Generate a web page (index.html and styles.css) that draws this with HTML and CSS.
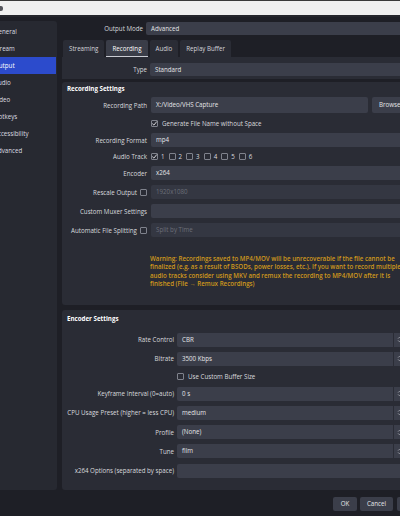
FILE: index.html
```html
<!DOCTYPE html>
<html>
<head>
  <title>Settings</title>
  <link rel="stylesheet" href="styles.css">
</head>
<body>
  <div class="titlebar"><span class="title-icon"></span></div>

  <div class="window">
    <ul class="sidebar">
      <li>General</li>
      <li>Stream</li>
      <li class="active">Output</li>
      <li>Audio</li>
      <li>Video</li>
      <li>Hotkeys</li>
      <li>Accessibility</li>
      <li>Advanced</li>
    </ul>

    <div class="content">
      <div class="mode-row">
        <span class="label">Output Mode</span>
        <div class="field">Advanced</div>
      </div>

      <div class="tabs">
        <span class="tab">Streaming</span>
        <span class="tab active">Recording</span>
        <span class="tab">Audio</span>
        <span class="tab">Replay Buffer</span>
      </div>

      <div class="type-pane">
        <span class="label">Type</span>
        <div class="field">Standard</div>
      </div>

      <section class="group rec-group">
        <div class="group-title">Recording Settings</div>
        <div class="form rec-form">
          <span class="label">Recording Path</span>
          <div class="path-row">
            <div class="field path-field">X:/Video/VHS Capture</div>
            <div class="button browse">Browse</div>
          </div>

          <div class="check-row">
            <span class="check checked"><svg viewBox="0 0 7 7"><path d="M1.3 3.6 L2.9 5.1 L5.8 1.5"/></svg></span>
            <span>Generate File Name without Space</span>
          </div>

          <span class="label">Recording Format</span>
          <div class="field">mp4</div>

          <span class="label">Audio Track</span>
          <div class="tracks">
            <span class="track"><span class="check checked"><svg viewBox="0 0 7 7"><path d="M1.3 3.6 L2.9 5.1 L5.8 1.5"/></svg></span>1</span>
            <span class="track"><span class="check"></span>2</span>
            <span class="track"><span class="check"></span>3</span>
            <span class="track"><span class="check"></span>4</span>
            <span class="track"><span class="check"></span>5</span>
            <span class="track"><span class="check"></span>6</span>
          </div>

          <span class="label">Encoder</span>
          <div class="field">x264</div>

          <span class="label with-check">Rescale Output <span class="check"></span></span>
          <div class="field disabled">1920x1080</div>

          <span class="label">Custom Muxer Settings</span>
          <div class="field"></div>

          <span class="label with-check">Automatic File Splitting <span class="check"></span></span>
          <div class="field disabled">Split by Time</div>

          <p class="warning">Warning: Recordings saved to MP4/MOV will be unrecoverable if the file cannot be<br>finalized (e.g. as a result of BSODs, power losses, etc.). If you want to record multiple<br>audio tracks consider using MKV and remux the recording to MP4/MOV after it is<br>finished (File → Remux Recordings)</p>
        </div>
      </section>

      <section class="group enc-group">
        <div class="group-title">Encoder Settings</div>
        <div class="form enc-form">
          <span class="label">Rate Control</span>
          <div class="spin-field"><span class="value">CBR</span><span class="spin"><svg viewBox="0 0 6 10"><path d="M1.2 4 L3 2.2 L4.8 4 M1.2 6 L3 7.8 L4.8 6"/></svg></span></div>

          <span class="label">Bitrate</span>
          <div class="spin-field"><span class="value">3500 Kbps</span><span class="spin"><svg viewBox="0 0 6 10"><path d="M1.2 4 L3 2.2 L4.8 4 M1.2 6 L3 7.8 L4.8 6"/></svg></span></div>

          <div class="check-row">
            <span class="check"></span>
            <span>Use Custom Buffer Size</span>
          </div>

          <span class="label">Keyframe Interval (0=auto)</span>
          <div class="spin-field"><span class="value">0 s</span><span class="spin"><svg viewBox="0 0 6 10"><path d="M1.2 4 L3 2.2 L4.8 4 M1.2 6 L3 7.8 L4.8 6"/></svg></span></div>

          <span class="label">CPU Usage Preset (higher = less CPU)</span>
          <div class="spin-field"><span class="value">medium</span><span class="spin"><svg viewBox="0 0 6 10"><path d="M1.2 4 L3 2.2 L4.8 4 M1.2 6 L3 7.8 L4.8 6"/></svg></span></div>

          <span class="label">Profile</span>
          <div class="spin-field"><span class="value">(None)</span><span class="spin"><svg viewBox="0 0 6 10"><path d="M1.2 4 L3 2.2 L4.8 4 M1.2 6 L3 7.8 L4.8 6"/></svg></span></div>

          <span class="label">Tune</span>
          <div class="spin-field"><span class="value">film</span><span class="spin"><svg viewBox="0 0 6 10"><path d="M1.2 4 L3 2.2 L4.8 4 M1.2 6 L3 7.8 L4.8 6"/></svg></span></div>

          <span class="label">x264 Options (separated by space)</span>
          <div class="field"></div>
        </div>
      </section>
    </div>
  </div>

  <div class="footer">
    <span class="button">OK</span>
    <span class="button cancel">Cancel</span>
    <span class="button">Apply</span>
  </div>
</body>
</html>
```

FILE: styles.css
```css
* {
  box-sizing: border-box;
}
body {
  margin: 0;
  width: 400px;
  height: 516px;
  overflow: hidden;
  background-color: #1e1f26;
  font-family: "Open Sans", sans-serif;
  font-size: 6.2px;
  color: #d9dade;
}
.titlebar {
  height: 17px;
  background-color: #f0f0f0;
  border-top: 1px solid #3a3a3a;
  border-bottom: 2px solid #25262c;
  display: flex;
  align-items: center;
}
.title-icon {
  width: 7px;
  height: 5px;
  margin-left: -4px;
  background-color: #55565c;
  border-radius: 2px;
}

/* main window: sidebar + page */
.window {
  display: flex;
  gap: 5px;
  width: 440px;
  margin-left: -20px;
  padding-top: 4px;
  height: 473px;
}
.sidebar {
  list-style: none;
  margin: 0;
  padding: 2px 0 0 0;
  width: 77px;
  flex-shrink: 0;
  height: 469px;
  background-color: #272931;
  border-radius: 0 3px 3px 0;
}
.sidebar li {
  height: 17px;
  line-height: 17px;
  padding-left: 14px;
  color: #dcdde1;
}
.sidebar li.active {
  background-color: #2c4bcc;
  margin-right: 1px;
  color: #ffffff;
}
.content {
  width: 350px;
  flex-shrink: 0;
  display: flex;
  flex-direction: column;
}

.label {
  text-align: right;
  line-height: 9px;
  white-space: nowrap;
}
.field {
  height: 14px;
  line-height: 14px;
  padding-left: 5px;
  background-color: #3b3e4a;
  border-radius: 2px;
  white-space: nowrap;
  overflow: hidden;
  color: #e4e5e8;
}
.field.disabled {
  background-color: #343742;
  color: #6c6f79;
}

.mode-row {
  display: grid;
  grid-template-columns: 81px 1fr;
  column-gap: 3px;
  align-items: center;
  margin-top: 1px;
}
.mode-row .field {
  height: 13px;
  line-height: 13px;
}

/* tabs */
.tabs {
  display: flex;
  gap: 2px;
  margin-top: 5px;
  padding-left: 1px;
  height: 17px;
}
.tab {
  padding: 0 6px;
  line-height: 17px;
  background-color: #2a2c35;
  border-radius: 2px 2px 0 0;
  color: #d4d5da;
}
.tab.active {
  background-color: #3a3d48;
  box-shadow: inset 0 -1px 0 #c9cbd2;
  color: #ffffff;
}

.type-pane {
  display: grid;
  grid-template-columns: 85px 1fr;
  column-gap: 3px;
  align-items: center;
  padding: 6px 8px 3px 0;
  background-color: #2a2c35;
}
.type-pane .field {
  height: 13px;
  line-height: 13px;
}

/* group boxes */
.group {
  background-color: #2a2c35;
  border-radius: 3px;
  padding: 2px 8px 16px 5px;
}
.rec-group {
  margin-top: 3px;
}
.enc-group {
  margin-top: 5px;
  padding-top: 4px;
  padding-bottom: 12px;
}
.group-title {
  height: 10px;
  line-height: 10px;
  font-weight: 700;
  color: #ffffff;
}
.form {
  display: grid;
  align-items: center;
}
.rec-form {
  margin-top: 3px;
  grid-template-columns: 80px 1fr;
  column-gap: 4px;
  row-gap: 5px;
}
.enc-form {
  margin-top: 9px;
  grid-template-columns: 107px 1fr;
  column-gap: 3px;
  row-gap: 5.3px;
}

.path-row {
  display: flex;
  gap: 4px;
}
.path-field {
  flex: 1;
  height: 16px;
  line-height: 16px;
}
.button {
  background-color: #3b3e4a;
  border-radius: 2px;
  text-align: center;
  color: #e4e5e8;
}
.browse {
  width: 32px;
  height: 16px;
  line-height: 16px;
  text-align: left;
  padding-left: 7px;
}

/* checkboxes */
.check {
  display: inline-flex;
  width: 7px;
  height: 7px;
  border: 1px solid #7f828c;
  border-radius: 1px;
  flex-shrink: 0;
}
.check svg {
  width: 7px;
  height: 7px;
  margin: -1px;
}
.check svg path {
  fill: none;
  stroke: #e6e7ea;
  stroke-width: 0.9;
}
.check-row {
  grid-column: 2;
  display: flex;
  align-items: center;
  gap: 4px;
  height: 10px;
}
.tracks {
  display: flex;
  align-items: center;
  gap: 4px;
  height: 9px;
}
.track {
  display: flex;
  align-items: center;
  gap: 3px;
}
.label.with-check {
  display: flex;
  justify-content: flex-end;
  align-items: center;
  gap: 3px;
}

.warning {
  grid-column: 2;
  margin: 13px 0 0 -1px;
  line-height: 8.4px;
  white-space: nowrap;
  font-weight: 600;
  color: #cf981c;
}

/* combo / spin boxes */
.spin-field {
  display: flex;
  gap: 1px;
  height: 14px;
}
.spin-field .value {
  flex: 1;
  line-height: 14px;
  padding-left: 5px;
  background-color: #3b3e4a;
  border-radius: 2px 0 0 2px;
  color: #e4e5e8;
}
.spin {
  width: 10px;
  display: flex;
  align-items: center;
  justify-content: center;
  background-color: #3b3e4a;
}
.spin svg {
  width: 5px;
  height: 9px;
}
.spin svg path {
  fill: none;
  stroke: #b9bbc2;
  stroke-width: 0.8;
}

/* bottom buttons */
.footer {
  display: flex;
  justify-content: flex-end;
  gap: 3px;
  width: 436px;
  height: 26px;
  padding: 7px 7px 0 0;
}
.footer .button {
  width: 24px;
  height: 14px;
  line-height: 14px;
}
.footer .cancel {
  width: 33px;
  margin-right: 1px;
}
.footer .button:last-child {
  width: 32px;
}
```
